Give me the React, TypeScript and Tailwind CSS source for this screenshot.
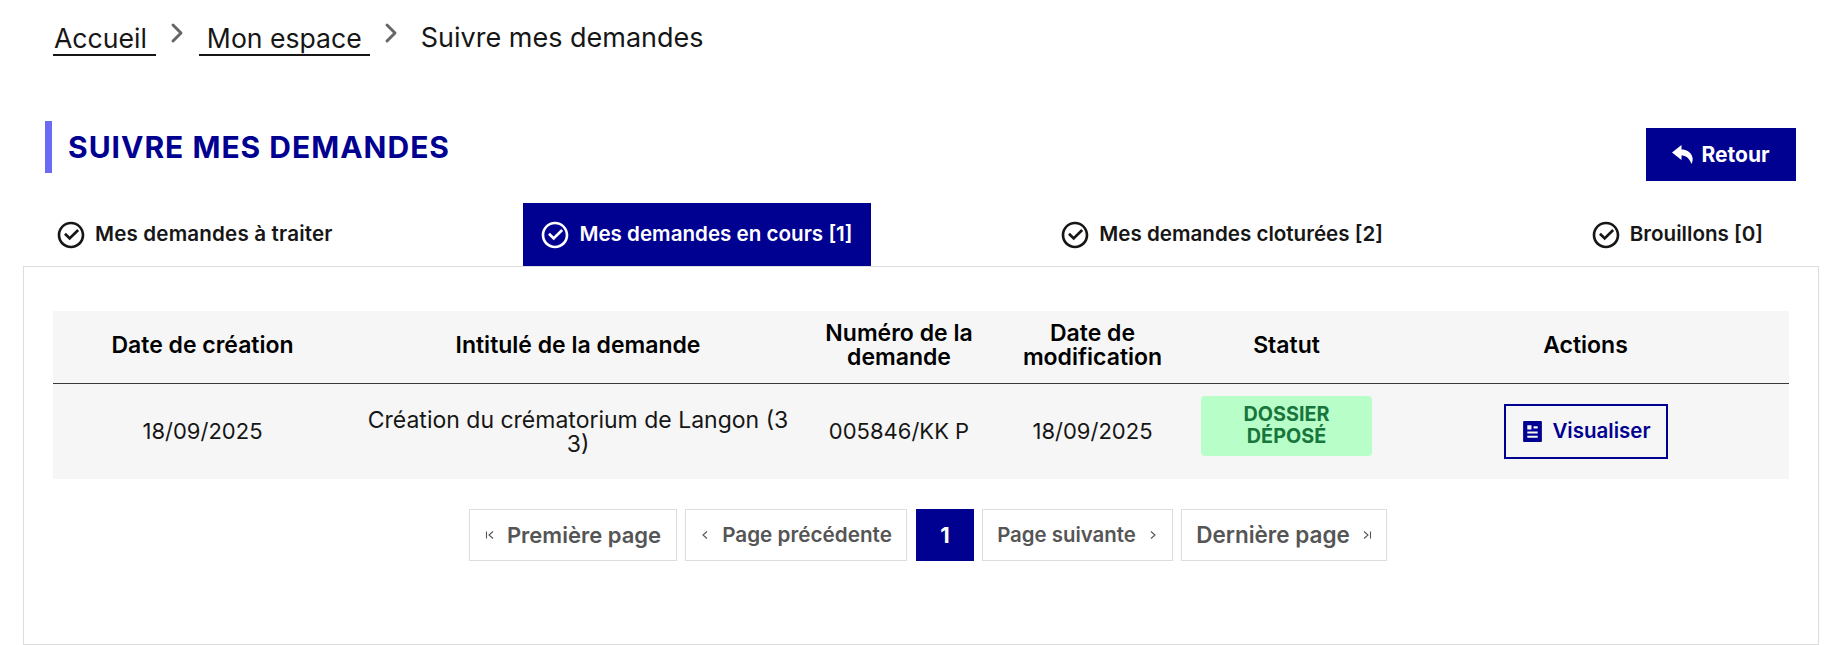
import React from "react";
import { ChevronRight } from "lucide-react";
import { RiCheckboxCircleLine, RiArticleFill } from "react-icons/ri";

function Tab({ label, active, wide }: { label: string; active?: boolean; wide?: boolean }) {
  return (
    <div className={active ? "flex items-center h-[63px] pl-[16px] pr-[19px] gap-[8px] bg-[#000091] text-white" : "flex items-center h-[63px] pl-[16px] pr-[19px] gap-[8px] text-[#161616]"}>
      <RiCheckboxCircleLine className="w-[32px] h-[32px] shrink-0" />
      <span className={wide ? "text-[20.6px] font-semibold whitespace-nowrap tracking-[0.16px]" : "text-[20.6px] font-semibold whitespace-nowrap"}>{label}</span>
    </div>
  );
}

function PageBtn({ children, w, size }: { children: React.ReactNode; w: string; size: string }) {
  return (
    <div className={`flex items-center justify-center gap-[12px] h-[52px] border border-[#dddddd] font-semibold text-[#555555] whitespace-nowrap ${w} ${size}`}>
      {children}
    </div>
  );
}

function PagerIcon({ d }: { d: string }) {
  return (
    <svg viewBox="0 0 10 10" className="w-[10px] h-[10px] shrink-0" fill="none" stroke="#555555" strokeWidth={1.1}>
      <path d={d} />
    </svg>
  );
}

export default function App() {
  return (
    <div className="w-[1843px] h-[645px] overflow-hidden bg-white text-[#161616] font-['Inter','Liberation_Sans',sans-serif]">
      <nav className="flex items-start pt-[17px] pl-[53px] h-[121px] text-[26.6px] leading-[37px]">
        <a className="mt-[3px] border-b-2 border-[#161616] pl-[1px] pr-[9px] h-[36px]">Accueil</a>
        <ChevronRight className="w-[32px] h-[32px] ml-[5px] mr-[6px] text-[#666666]" strokeWidth={2.2} />
        <a className="mt-[3px] border-b-2 border-[#161616] px-[8px] h-[36px]">Mon espace</a>
        <ChevronRight className="w-[32px] h-[32px] ml-[5px] text-[#666666]" strokeWidth={2.2} />
        <span className="mt-[2px] ml-[14px] text-[27px]">Suivre mes demandes</span>
      </nav>

      <div className="flex items-start justify-between pl-[45px] pr-[47px] h-[82px]">
        <h1 className="flex items-center h-[52px] border-l-[7px] border-[#6a6af4] pl-[16px] text-[30px] leading-[36px] tracking-[1px] font-bold text-[#000091] whitespace-nowrap">
          SUIVRE MES DEMANDES
        </h1>
        <button className="mt-[7px] flex items-center justify-center gap-[8px] w-[150px] h-[53px] bg-[#000091] text-white text-[21px] font-bold">
          <svg viewBox="0 0 21 19" className="w-[21px] h-[19px]" fill="currentColor">
            <path d="M9.5 0L0 7.5L9.5 15V10.5C13.5 10.5 17 12.5 19.5 19C21 16 21 13 20 11C18.5 7 14.5 4.5 9.5 4.5Z" />
          </svg>
          Retour
        </button>
      </div>

      <div className="flex justify-between pl-[39px] pr-[61px]">
        <Tab label="Mes demandes à traiter" wide />
        <Tab label="Mes demandes en cours [1]" active />
        <Tab label="Mes demandes cloturées [2]" />
        <Tab label="Brouillons [0]" />
      </div>

      <section className="ml-[23px] mr-[24px] h-[379px] border border-[#dddddd] px-[29px] pt-[44px]">
        <table className="w-[1736px] table-fixed border-collapse bg-[#f6f6f6] text-center">
          <colgroup>
            <col className="w-[299px]" />
            <col className="w-[452px]" />
            <col className="w-[190px]" />
            <col className="w-[197px]" />
            <col className="w-[191px]" />
            <col className="w-[407px]" />
          </colgroup>
          <thead>
            <tr className="h-[72px] border-b border-[#3a3a3a] text-[23px] leading-[23.5px] text-black">
              <th className="font-semibold pb-[2px]">Date de création</th>
              <th className="font-semibold pb-[2px]">Intitulé de la demande</th>
              <th className="font-semibold pb-[2px]">Numéro de la demande</th>
              <th className="font-semibold pb-[2px]">Date de<br />modification</th>
              <th className="font-semibold pb-[2px]">Statut</th>
              <th className="font-semibold pb-[2px]">Actions</th>
            </tr>
          </thead>
          <tbody>
            <tr className="h-[96px] text-[22px] leading-[24px] text-[#161616]">
              <td>18/09/2025</td>
              <td className="px-[10px] pt-[2px] text-[23px]">Création du crématorium de Langon (3 3)</td>
              <td>005846/KK P</td>
              <td>18/09/2025</td>
              <td>
                <div className="mx-auto mb-[10px] pb-[2px] w-[171px] h-[60px] rounded-[4px] bg-[#b8fec9] text-[#18753c] text-[19.8px] leading-[22px] font-bold flex items-center justify-center">
                  DOSSIER<br />DÉPOSÉ
                </div>
              </td>
              <td>
                <button className="mx-auto flex items-center justify-center gap-[7px] w-[164px] h-[55px] border-2 border-[#000091] text-[#000091] text-[20.5px] font-semibold">
                  <RiArticleFill className="w-[25px] h-[25px]" />
                  Visualiser
                </button>
              </td>
            </tr>
          </tbody>
        </table>

        <div className="flex justify-start gap-[8px] mt-[30px] ml-[416px]">
          <PageBtn w="w-[208px]" size="text-[22px]">
            <PagerIcon d="M1.5 1.5V8.5M8 1.5L4 5L8 8.5" />
            Première page
          </PageBtn>
          <PageBtn w="w-[222px]" size="text-[20.7px]">
            <PagerIcon d="M7 1.5L3 5L7 8.5" />
            Page précédente
          </PageBtn>
          <div className="flex items-center justify-center ml-[1px] w-[58px] h-[52px] bg-[#000091] text-white text-[22px] font-bold">1</div>
          <PageBtn w="w-[191px]" size="text-[20.4px]">
            Page suivante
            <PagerIcon d="M3 1.5L7 5L3 8.5" />
          </PageBtn>
          <PageBtn w="w-[206px]" size="text-[22.5px]">
            Dernière page
            <PagerIcon d="M2 1.5L6 5L2 8.5M8.5 1.5V8.5" />
          </PageBtn>
        </div>
      </section>
    </div>
  );
}
